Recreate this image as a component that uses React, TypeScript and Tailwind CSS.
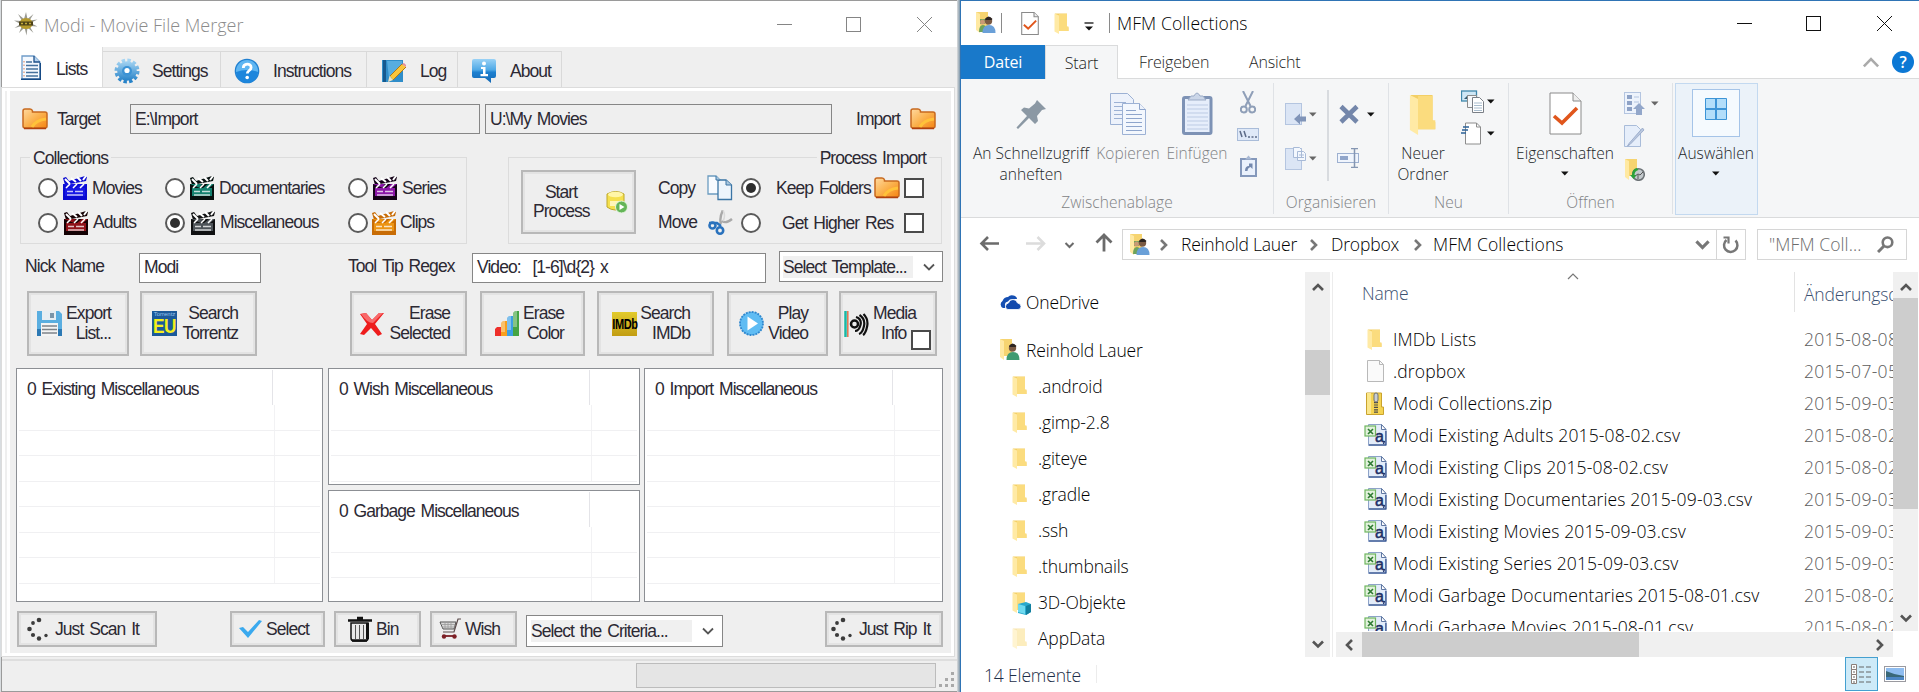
import React from "react";

type Kids = { children?: React.ReactNode; className?: string };

/* ---------- shared glyphs ---------- */

function WindowButtons({ color }: { color: string }) {
  return (
    <svg width="156" height="16" viewBox="0 0 156 16" fill="none" stroke={color} strokeWidth="1" shapeRendering="crispEdges">
      <path d="M1 8.5h15" />
      <rect x="70.5" y="1.5" width="14" height="14" />
      <path d="M141 1l15 15M156 1l-15 15" shapeRendering="auto" />
    </svg>
  );
}

function Caret({ color = "#111" }: { color?: string }) {
  return (
    <svg width="8" height="5" viewBox="0 0 8 5" className="shrink-0">
      <path d="M0 0.5h7.5L3.75 4.5z" fill={color} />
    </svg>
  );
}

function Chevron({ dir, color = "#555", size = 14, stroke = 2.6 }: { dir: "up" | "down" | "left" | "right"; color?: string; size?: number; stroke?: number }) {
  const d = {
    up: "M2 10l5-5 5 5",
    down: "M2 4.5l5 5 5-5",
    left: "M10 2L5 7l5 5",
    right: "M5 2l5 5-5 5",
  }[dir];
  return (
    <svg width={size} height={size} viewBox="0 0 14 14" fill="none" stroke={color} strokeWidth={stroke} className="shrink-0">
      <path d={d} />
    </svg>
  );
}

/* ---------- icons of the merger window ---------- */

function SpiderIcon() {
  return (
    <svg width="24" height="24" viewBox="0 0 24 24">
      <path d="M12 0l1.500 7 6-5-4 6.500 8-1-7 3.500 7 3.500-8-.5 4 7-6-5.500-1 8-2-8-5.500 5.500 3-7L.5 16l6-4L0 8.500l8 .5-4-7 6 5z" fill="#9a9a92" />
      <ellipse cx="12" cy="11.500" rx="6.500" ry="5.500" fill="#b59a2d" />
      <path d="M5 9.500h14v4H5z" fill="#4d4218" />
      <path d="M7 11.500h2m2 0h2m2 0h2" stroke="#c4ab3c" strokeWidth="1.500" />
    </svg>
  );
}

function ListIcon() {
  return (
    <svg width="22" height="25" viewBox="0 0 22 25">
      <path d="M2 1h12l6 6v17H2z" fill="#f4f9ff" stroke="#6f9cc9" strokeWidth="1.300" />
      <path d="M14 1v6h6" fill="#b8d4f0" stroke="#1d4f88" strokeWidth="1.300" />
      <path d="M6 7h6M6 10.500h12M6 14h12M6 17.500h12M6 21h12" stroke="#44719d" strokeWidth="1.500" />
      <path d="M4 6v16" stroke="#e2a58b" strokeWidth="1.500" strokeDasharray="1.500 2" />
      <path d="M1 24.200h20M20.300 8v16" stroke="#164a85" strokeWidth="1.400" />
    </svg>
  );
}

function GearIcon() {
  return (
    <svg width="26" height="26" viewBox="0 0 26 26">
      <defs>
        <linearGradient id="gear" x1="0" y1="0" x2="0" y2="1">
          <stop offset="0" stopColor="#a5d4f2" />
          <stop offset="1" stopColor="#2682c8" />
        </linearGradient>
      </defs>
      <circle cx="13" cy="13" r="10.500" fill="none" stroke="url(#gear)" strokeWidth="4" strokeDasharray="3.300 2.200" />
      <circle cx="13" cy="13" r="9.800" fill="url(#gear)" />
      <circle cx="13" cy="13" r="5" fill="#3c93d5" />
      <circle cx="13" cy="12.500" r="2.600" fill="#fff" />
    </svg>
  );
}

function HelpIcon() {
  return (
    <svg width="26" height="26" viewBox="0 0 26 26">
      <circle cx="13" cy="13" r="12.300" fill="#1f7fd0" />
      <circle cx="13" cy="13" r="11" fill="#5fb6f2" />
      <path d="M2 14a11 11 0 0022 0q-11-4-22 0z" fill="#1d86dc" />
      <path d="M9.300 10c0-5 7.800-5 7.800-.5 0 3-3.800 3-3.800 6" fill="none" stroke="#fff" strokeWidth="2.800" />
      <circle cx="13.200" cy="19.500" r="1.800" fill="#fff" />
    </svg>
  );
}

function LogIcon() {
  return (
    <svg width="26" height="26" viewBox="0 0 26 26">
      <path d="M1 2h21v22H1z" fill="#2f8dc9" />
      <path d="M2 2h3v22H2z" fill="#15598f" />
      <path d="M6 3h15v9L8 20z" fill="#57ade0" />
      <path d="M9 18L21 6l4 3-13 13z" fill="#fbc63b" />
      <path d="M9 18L21 6M12 22L25 9" stroke="#b07912" strokeWidth="1" />
      <path d="M21 6l2-1 2 2v2z" fill="#e58a9a" />
      <path d="M8.500 18l3.500 4-5 2z" fill="#f1e3c0" />
    </svg>
  );
}

function InfoIcon() {
  return (
    <svg width="26" height="26" viewBox="0 0 26 26">
      <defs>
        <linearGradient id="info" x1="0" y1="0" x2="0" y2="1">
          <stop offset="0" stopColor="#9ad2f6" />
          <stop offset="0.45" stopColor="#4fa9e6" />
          <stop offset="0.55" stopColor="#1d80d0" />
          <stop offset="1" stopColor="#1468b4" />
        </linearGradient>
      </defs>
      <path d="M3 1h20q2 0 2 2v15q0 2-2 2h-3v5l-6-5H3q-2 0-2-2V3q0-2 2-2z" fill="url(#info)" />
      <circle cx="13" cy="5.500" r="2" fill="#fff" />
      <path d="M10 9h4.500v7H17v2.200H9.500V16H12v-5h-2z" fill="#fff" />
    </svg>
  );
}

function OrangeFolder() {
  return (
    <svg width="26" height="22" viewBox="0 0 26 22" className="shrink-0">
      <defs>
        <linearGradient id="ofold" x1="0" y1="0" x2="1" y2="1">
          <stop offset="0" stopColor="#ffd9a0" />
          <stop offset="0.5" stopColor="#fbb24e" />
          <stop offset="1" stopColor="#f58412" />
        </linearGradient>
      </defs>
      <path d="M1 3q0-2 2-2h5q2 0 2.500 2v1H23q2 0 2 2v12q0 2-2 2H3q-2 0-2-2z" fill="url(#ofold)" stroke="#c7691f" strokeWidth="1.500" />
      <path d="M10 19q4-7 14-8" fill="none" stroke="#ffc23a" strokeWidth="3" />
      <path d="M2 20.500h22" stroke="#b0400e" strokeWidth="1.500" />
    </svg>
  );
}

function Clapper({ main, dark }: { main: string; dark: string }) {
  return (
    <svg width="24" height="24" viewBox="0 0 24 24" className="shrink-0">
      <path d="M0 2l3-1 3 4 16-5 2 1-1 4L2 9z" fill={dark} />
      <path d="M2 3l5 5M8 2l5 4M14 1l4 4M23 0l-3 4" stroke="#fff" strokeWidth="2" />
      <path d="M0 8h24v16H0z" fill={main} />
      <path d="M0 12v-4l10 4zM12 8l6 0-5 4h-4zM24 8v4h-5z" fill={dark} />
      <path d="M3 12l4-4M10 12l4-4M17 12l4-4" stroke="#fff" strokeWidth="1.600" />
      <path d="M0 20h24v4H0zM0 12h2v12H0zM22 12h2v12h-2z" fill={dark} />
      <path d="M4 15.500h6m2 0h8M4 19h16" stroke="#fff" strokeOpacity="0.75" strokeWidth="1.300" />
    </svg>
  );
}

function StartIcon() {
  return (
    <svg width="22" height="24" viewBox="0 0 22 24" className="shrink-0">
      <path d="M1 4q9-5 17 0v13q-9 6-17 0z" fill="#f5e04e" stroke="#bda728" />
      <ellipse cx="9.500" cy="4.500" rx="7.500" ry="2.800" fill="#fff6a8" />
      <path d="M4 11h9v5H4z" fill="#fff6b8" />
      <circle cx="15.500" cy="17" r="6" fill="#64b558" stroke="#e4f5df" />
      <path d="M13.500 14l5 3-5 3z" fill="#fff" />
    </svg>
  );
}

function CopyPages() {
  return (
    <svg width="26" height="26" viewBox="0 0 26 26" className="shrink-0">
      <path d="M1 1h8l4 4v14H1z" fill="#f7fbff" stroke="#6c9cc0" strokeWidth="1.300" />
      <path d="M11 5h8l5.500 5v14.500H11z" fill="#edf5fc" stroke="#3b75a5" strokeWidth="1.300" />
      <path d="M9 1v4h4M19 5v5h5.500" fill="#a9c8e0" stroke="#3b75a5" />
    </svg>
  );
}

function MoveScissors() {
  return (
    <svg width="26" height="26" viewBox="0 0 26 26" className="shrink-0" fill="none">
      <path d="M16 0q-4 8-2 14M25 9q-6 5-10 2" stroke="#a9a9a9" strokeWidth="2.400" />
      <path d="M16 0q3 6 0 11" stroke="#d9d9d9" strokeWidth="1.500" />
      <path d="M2 13h8l4 3" stroke="#2a72bd" strokeWidth="2.500" />
      <circle cx="5.500" cy="15.500" r="3" stroke="#2a72bd" strokeWidth="2.600" />
      <circle cx="13" cy="20.500" r="3.200" stroke="#2a72bd" strokeWidth="2.600" />
    </svg>
  );
}

function Floppy() {
  return (
    <svg width="25" height="25" viewBox="0 0 25 25" className="shrink-0">
      <path d="M0 0h22l3 3v22H0z" fill="#5aaee0" />
      <path d="M0 18h25v7H0z" fill="#2c79b4" />
      <path d="M5 0h14v9H5z" fill="#e8eef2" />
      <path d="M13 2h4v5h-4z" fill="#7b95a8" />
      <path d="M4 12h17v13H4z" fill="#f4f4f4" />
      <path d="M5 15h15M5 18.500h15M5 22h15" stroke="#7d8389" strokeWidth="1.500" />
    </svg>
  );
}

function EuIcon() {
  return (
    <span className="flex h-[25px] w-[25px] shrink-0 flex-col items-center overflow-hidden bg-[#1c5a9a]">
      <span className="h-[6px] text-[6px] leading-[7px] tracking-normal text-[#9dc4ea]">Torrentz</span>
      <span className="scale-x-[0.86] text-[20px] leading-[19px] font-bold tracking-[-0.5px] text-[#f6f01b]">EU</span>
    </span>
  );
}

function RedCross() {
  return (
    <svg width="26" height="26" viewBox="0 0 26 26" className="shrink-0">
      <path d="M1 3l6-1 6 7 7-7 5 0-9 11 7 10-4 2-7-8-7 7-4-1 7-10z" fill="#ee1c1c" />
      <path d="M2 3l5-1 6 7 7-7 4 0-10 10q-6 0-12-9z" fill="#f8696a" />
    </svg>
  );
}

function BarsIcon() {
  return (
    <svg width="26" height="26" viewBox="0 0 26 26" className="shrink-0">
      <path d="M1 18l2-2h4v9H1z" fill="#ee2f2a" />
      <path d="M7 12l2-2h4v15H7z" fill="#f7a01e" />
      <path d="M13 7l2-2h4v20h-6z" fill="#3d9fe2" />
      <path d="M19 2l2-2h4v25h-6z" fill="#45a443" />
      <path d="M7 12l2-2h2v11H7zM13 7l2-2h2v14h-4zM19 2l2-2h2v16h-4z" fill="#fff" fillOpacity="0.35" />
    </svg>
  );
}

function ImdbIcon() {
  return (
    <span className="flex h-[24px] w-[25px] shrink-0 items-center justify-center bg-linear-to-b from-[#e2cb2c] to-[#c29d12]">
      <span className="scale-x-[0.85] scale-y-[1.15] text-[13px] font-bold tracking-[-0.5px] text-black">IMDb</span>
    </span>
  );
}

function PlayIcon() {
  return (
    <svg width="25" height="25" viewBox="0 0 25 25" className="shrink-0">
      <circle cx="12.500" cy="12.500" r="11.500" fill="#5fbcf3" stroke="#2f88cf" strokeWidth="1.800" strokeDasharray="2 1" />
      <path d="M8.500 5.500l10.500 7-10.500 7z" fill="#fff" />
    </svg>
  );
}

function MediaIcon() {
  return (
    <svg width="25" height="26" viewBox="0 0 25 26" className="shrink-0" fill="none" stroke="#111">
      <path d="M1.500 0v26" stroke="#19b8a5" strokeWidth="2.500" />
      <path d="M3.800 0v26" stroke="#e2724d" strokeWidth="1.500" />
      <circle cx="10.500" cy="13" r="3.500" strokeWidth="2.500" />
      <path d="M12 6q6 2 4.500 8t-5.500 6M15.500 4q6 4 4.500 11t-5 8M19.500 3q5 5 3.700 12t-4.200 9" strokeWidth="2.200" />
    </svg>
  );
}

function DotsIcon() {
  const dots: [number, number, number][] = [[12, 3, 2.3], [6, 6, 1.900], [2.500, 12, 2.300], [6, 18, 2.100], [12, 21.500, 2.200], [19, 18.500, 1.700]];
  return (
    <svg width="22" height="25" viewBox="0 0 22 25" className="shrink-0">
      {dots.map(([x, y, r]) => (
        <circle key={`${x}-${y}`} cx={x} cy={y} r={r} fill="#3c3c3c" />
      ))}
    </svg>
  );
}

function CheckBlue() {
  return (
    <svg width="23" height="20" viewBox="0 0 23 20" className="shrink-0">
      <path d="M0 9l4-1 5 5L20 1l3 1L9 19z" fill="#3aa9ee" />
    </svg>
  );
}

function BinIcon() {
  return (
    <svg width="24" height="26" viewBox="0 0 24 26" className="shrink-0" fill="none" stroke="#111">
      <path d="M9 2h6M0 4.500h24" strokeWidth="2.600" />
      <path d="M3 7v15q0 3 3 3h11q3 0 3-3V7z" fill="#e9e9e9" strokeWidth="1.500" />
      <path d="M19.500 7v16" strokeWidth="3" />
      <path d="M7.500 9v14M11.500 9v14M15.500 9v14" strokeWidth="1" stroke="#555" />
      <path d="M4 24.500h15" strokeWidth="2.500" />
    </svg>
  );
}

function CartIcon() {
  return (
    <svg width="22" height="22" viewBox="0 0 22 22" className="shrink-0" fill="none">
      <path d="M1 4h16l-2 7H4z" fill="#dadada" stroke="#555" />
      <path d="M22 1h-3l-4 13H4" stroke="#5a4a4a" strokeWidth="1.200" />
      <path d="M2 6.500h14M3 9h13M6 4v7M9 4v7M12 4v7" stroke="#999" strokeWidth="0.8" />
      <path d="M4 18h13" stroke="#7c1f25" strokeWidth="1.800" />
      <circle cx="5" cy="18.500" r="2.200" fill="#7c1f25" />
      <circle cx="15.500" cy="18.500" r="2.200" fill="#7c1f25" />
    </svg>
  );
}

/* ---------- merger window controls ---------- */

function Radio({ on }: { on?: boolean }) {
  return (
    <span className="flex h-[20px] w-[20px] shrink-0 items-center justify-center rounded-full border-2 border-[#5a5a5a] bg-white">
      {on && <span className="h-[10px] w-[10px] rounded-full bg-[#2e2e2e]" />}
    </span>
  );
}

function CheckBox({ className = "" }: { className?: string }) {
  return <span className={`block h-[20px] w-[20px] shrink-0 border-2 border-[#4a4a4a] bg-white ${className}`} />;
}

function PushButton({ children, className = "" }: Kids) {
  return (
    <div className={`flex shrink-0 items-center border-2 border-[#b8b8b8] bg-[#eeeeee] shadow-[inset_0_0_0_2px_#e3e3e3] ${className}`}>
      {children}
    </div>
  );
}

function TabItem({ icon, label, className }: { icon: React.ReactNode; label: string; className: string }) {
  return (
    <div className={`flex h-[37px] items-center border-t border-r border-[#d9d9d9] pt-[2px] ${className}`}>
      {icon}
      <span>{label}</span>
    </div>
  );
}

function ListPane({ title, className, col, rows }: { title: string; className: string; col: string; rows: number }) {
  return (
    <div className={`flex flex-col overflow-hidden border-[1.5px] border-[#8c8f94] bg-white ${className}`}>
      <div className="flex h-[36px] shrink-0 pt-[1px]">
        <div className={`flex items-center border-r border-[#e4e4e8] pt-[4px] pl-[10px] tracking-[-1px] whitespace-nowrap ${col}`}>{title}</div>
      </div>
      {Array.from({ length: rows }, (_, i) => (
        <div key={i} className="mx-[2px] flex h-[25.5px] shrink-0 border-b border-[#f0f0f2]">
          <div className={`border-r border-[#f2f2f4] ${col}`} />
        </div>
      ))}
    </div>
  );
}

function MergerWindow() {
  return (
    <section className="flex h-[692px] w-[960px] shrink-0 overflow-hidden bg-[#d9dde0] pl-px font-['Liberation_Sans',Arial,sans-serif] text-[17.5px] tracking-[-0.95px] text-[#2c2933] [word-spacing:2px]">
      <div className="flex w-[956px] flex-col border-t border-b border-l border-[#9a9a9a] bg-[#efefef]">
        <header className="flex h-[46px] shrink-0 items-center bg-white pl-[12px]">
          <SpiderIcon />
          <span className="ml-[6px] pt-[2px] font-['Open_Sans','Noto_Sans',sans-serif] text-[18px] font-light tracking-[0px] text-[#8b8b8b] [word-spacing:0px]">Modi - Movie File Merger</span>
          <span className="mr-[25px] ml-auto">
            <WindowButtons color="#858585" />
          </span>
        </header>

        <nav className="flex h-[41px] shrink-0 items-end">
          <div className="flex h-[41px] w-[101px] items-center border-r border-[#dcdcdc] bg-white pl-[18px]">
            <ListIcon />
            <span className="ml-[14px] pt-[3px]">Lists</span>
          </div>
          <TabItem icon={<GearIcon />} label="Settings" className="w-[118px] gap-[12px] pl-[11px]" />
          <TabItem icon={<HelpIcon />} label="Instructions" className="w-[146px] gap-[13px] pl-[13px]" />
          <TabItem icon={<LogIcon />} label="Log" className="w-[91px] gap-[13px] pl-[14px]" />
          <TabItem icon={<InfoIcon />} label="About" className="w-[104px] gap-[13px] pl-[13px]" />
        </nav>

        <div className="mr-[3px] flex h-[568px] shrink-0 flex-col border-[3px] border-white bg-[#efefef] pl-[2px] shadow-[0_0_0_1px_#dcdcdc]">
          <div className="flex h-[562px] flex-col border-l-[3px] border-white">
            {/* paths */}
            <div className="mt-[13px] flex h-[30px] shrink-0 items-center pl-[12px]">
              <OrangeFolder />
              <span className="ml-[9px] w-[73px]">Target</span>
              <div className="flex h-[30px] w-[350px] items-center border-[1.5px] border-[#868686] pl-[4px]">E:\Import</div>
              <div className="ml-[5px] flex h-[30px] w-[347px] items-center border-[1.5px] border-[#868686] pl-[4px]">U:\My Movies</div>
              <span className="ml-[24px] w-[42px]">Import</span>
              <span className="ml-[12px]"><OrangeFolder /></span>
            </div>

            {/* option groups */}
            <div className="mt-[13px] flex h-[97px] shrink-0 pl-[10px]">
              <fieldset className="h-[97px] w-[447px] border-[1.5px] border-[#dcdcdc]">
                <legend className="ml-[9px] h-[20px] px-[3px] leading-[22px]">Collections</legend>
                <div className="grid grid-cols-[127px_183px_118px] grid-rows-[34px_35px] items-center pt-[4px] pl-[17px] whitespace-nowrap">
                  <div className="flex items-center gap-[5px]"><Radio /><Clapper main="#1717e6" dark="#0a0ad0" /><span>Movies</span></div>
                  <div className="flex items-center gap-[5px]"><Radio /><Clapper main="#13806f" dark="#06100f" /><span>Documentaries</span></div>
                  <div className="flex items-center gap-[5px]"><Radio /><Clapper main="#8b16a8" dark="#140318" /><span>Series</span></div>
                  <div className="flex items-center gap-[5px]"><Radio /><span className="ml-[1px]"><Clapper main="#8f1219" dark="#150204" /></span><span>Adults</span></div>
                  <div className="flex items-center gap-[5px]"><Radio on /><span className="ml-[1px]"><Clapper main="#4d5358" dark="#101112" /></span><span>Miscellaneous</span></div>
                  <div className="flex items-center gap-[4px]"><Radio /><Clapper main="#ec9413" dark="#c86c05" /><span>Clips</span></div>
                </div>
              </fieldset>
              <fieldset className="ml-[41px] h-[97px] w-[434px] border-[1.5px] border-[#dcdcdc]">
                <legend className="mr-[12px] ml-auto h-[20px] px-[3px] leading-[22px]">Process Import</legend>
                <div className="flex pl-[12px] whitespace-nowrap">
                  <PushButton className="mt-[3px] h-[64px] w-[115px] pl-[10px]">
                    <span className="w-[56px] text-center leading-[19.5px]">Start<br />Process</span>
                    <span className="ml-[17px]"><StartIcon /></span>
                  </PushButton>
                  <div className="ml-[22px] grid grid-cols-[49px_34px_35px_98px_30px_20px] grid-rows-[34px_35px] items-center pt-[4px]">
                    <span>Copy</span><CopyPages /><Radio on /><span>Keep Folders</span><OrangeFolder /><CheckBox />
                    <span>Move</span><MoveScissors /><Radio /><span className="col-span-2 pt-[2px] pl-[6px]">Get Higher Res</span><CheckBox className="mt-[1px]" />
                  </div>
                </div>
              </fieldset>
            </div>

            {/* name and filter */}
            <div className="mt-[7px] flex h-[31px] shrink-0 items-center pl-[15px]">
              <span className="w-[114px]">Nick Name</span>
              <div className="mt-[2px] flex h-[30px] w-[122px] items-center border-[1.5px] border-[#868686] bg-white pl-[4px]">Modi</div>
              <span className="ml-[87px] w-[124px]">Tool Tip Regex</span>
              <div className="mt-[2px] flex h-[30px] w-[294px] items-center border-[1.5px] border-[#868686] bg-white pl-[4px] whitespace-pre">Video:  [1-6]\d{"{2}"} x</div>
              <div className="ml-[13px] flex h-[31px] w-[164px] items-center border-[1.5px] border-[#868686] bg-white pl-[3px]">
                <span className="h-[22px] w-[130px] bg-[#f0f0f0] leading-[22px] whitespace-nowrap">Select Template...</span>
                <span className="ml-[9px]"><Chevron dir="down" stroke={1.800} /></span>
              </div>
            </div>

            {/* actions */}
            <div className="mt-[9px] flex h-[65px] shrink-0 pl-[17px] text-right leading-[19.5px]">
              <PushButton className="w-[102px] pl-[8px]"><Floppy /><span className="ml-[3px] w-[46px]">Export<br />List...</span></PushButton>
              <PushButton className="ml-[11px] w-[117px] pl-[10px]"><EuIcon /><span className="ml-[3px] w-[58px]">Search<br />Torrentz</span></PushButton>
              <PushButton className="ml-[93px] w-[117px] pl-[7px]"><RedCross /><span className="ml-[2px] w-[63px]">Erase<br />Selected</span></PushButton>
              <PushButton className="ml-[13px] w-[105px] pl-[12px]"><BarsIcon /><span className="ml-[1px] w-[43px]">Erase<br />Color</span></PushButton>
              <PushButton className="ml-[12px] w-[117px] pl-[13px]"><ImdbIcon /><span className="ml-[2px] w-[51px]">Search<br />IMDb</span></PushButton>
              <PushButton className="ml-[13px] w-[101px] pl-[10px]"><PlayIcon /><span className="ml-[3px] w-[41px]">Play<br />Video</span></PushButton>
              <PushButton className="relative ml-[11px] w-[98px] pl-[3px]">
                <MediaIcon />
                <span className="ml-[4px] flex flex-col items-start">
                  <span>Media</span>
                  <span className="ml-[8px]">Info</span>
                </span>
                <CheckBox className="absolute right-[4px] bottom-[4px]" />
              </PushButton>
            </div>

            {/* lists */}
            <div className="mt-[12px] flex h-[234px] shrink-0 pl-[6px]">
              <ListPane title="0 Existing Miscellaneous" className="w-[307px]" col="w-[256px]" rows={7} />
              <div className="ml-[5px] flex w-[312px] flex-col gap-[5px]">
                <ListPane title="0 Wish Miscellaneous" className="h-[117px]" col="w-[261px]" rows={3} />
                <ListPane title="0 Garbage Miscellaneous" className="h-[112px]" col="w-[261px]" rows={3} />
              </div>
              <ListPane title="0 Import Miscellaneous" className="ml-[4px] w-[299px]" col="w-[248px]" rows={7} />
            </div>

            {/* bottom actions */}
            <div className="mt-[9px] flex h-[36px] shrink-0 pl-[7px] whitespace-nowrap">
              <PushButton className="w-[140px] pl-[8px]"><DotsIcon /><span className="ml-[6px]">Just Scan It</span></PushButton>
              <PushButton className="ml-[73px] w-[95px] pl-[7px]"><CheckBlue /><span className="ml-[4px]">Select</span></PushButton>
              <PushButton className="ml-[9px] w-[87px] pl-[12px]"><BinIcon /><span className="ml-[4px]">Bin</span></PushButton>
              <PushButton className="ml-[9px] w-[87px] pl-[7px]"><CartIcon /><span className="ml-[4px]">Wish</span></PushButton>
              <div className="mt-[4px] ml-[9px] flex h-[32px] w-[197px] items-center border-[1.5px] border-[#868686] bg-white pl-[4px]">
                <span className="h-[22px] w-[161px] bg-[#f0f0f0] leading-[22px]">Select the Criteria...</span>
                <span className="ml-[9px]"><Chevron dir="down" stroke={1.800} /></span>
              </div>
              <PushButton className="ml-[102px] w-[118px] pl-[4px]"><DotsIcon /><span className="ml-[6px]">Just Rip It</span></PushButton>
            </div>
          </div>
        </div>

        <footer className="mt-[3px] flex h-[32px] shrink-0 items-start border-t-2 border-[#dedede] pt-[2px] pl-[634px]">
          <div className="h-[25px] w-[300px] border border-[#bcbcbc] bg-[#e5e5e5]" />
          <svg width="16" height="16" viewBox="0 0 16 16" className="mt-[9px] ml-[3px]" fill="#a9a9a9">
            <path d="M12 0h3v3h-3zM6 6h3v3H6zM12 6h3v3h-3zM0 12h3v3H0zM6 12h3v3H6zM12 12h3v3h-3z" />
          </svg>
        </footer>
      </div>
      <div className="h-full w-[3px] bg-linear-to-r from-[#dcdcdc] to-[#7f97aa]" />
    </section>
  );
}

/* ---------- icons of the file window ---------- */

function Folder({ w = 16, h = 21, faded }: { w?: number; h?: number; faded?: boolean }) {
  return (
    <svg width={w} height={h} viewBox="0 0 16 21" preserveAspectRatio="none" className={faded ? "shrink-0 opacity-50" : "shrink-0"}>
      <path d="M1 0.5h12v13l1.500 1v3.500H4z" fill="#f3cf66" />
      <path d="M5 1h8v12.500h1.500V18H5z" fill="#fbdc7e" />
      <path d="M0.500 0.500l4.500 2V21l-4.500-2.500z" fill="#ffeaa5" />
    </svg>
  );
}

function PeopleFolder({ solo }: { solo?: boolean }) {
  return (
    <svg width="21" height="22" viewBox="0 0 21 22" className="shrink-0">
      <path d="M1 0h12v17H3z" fill="#f6d470" />
      <path d="M1 0l4 2v19l-4-3z" fill="#ffe9a2" />
      {!solo && <path d="M5 7h5v5H5zM4 20q0-7 4-7t4 7z" fill="#6fa35a" />}
      {!solo && <circle cx="7.500" cy="10" r="2.500" fill="#c99a74" />}
      <circle cx="13.500" cy="9" r="3.700" fill="#7a5a43" />
      <path d="M10 7q3.500-5 7.500 0l-1 1h-6z" fill="#2c2420" />
      <path d="M7.500 21q0-8 6.500-8t6.500 8z" fill={solo ? "#3f9a71" : "#6aa0d8"} />
    </svg>
  );
}

function CheckDoc({ w, h, line }: { w: number; h: number; line: number }) {
  return (
    <svg width={w} height={h} viewBox="0 0 33 43" className="shrink-0">
      <path d="M1 1h23l8 8v33H1z" fill="#fff" stroke="#8a8a8a" strokeWidth={line} />
      <path d="M24 1v8h8" fill="#eee" stroke="#8a8a8a" strokeWidth={line} />
      <path d="M5 24l8 7 15-15" fill="none" stroke="#e0561c" strokeWidth="3.600" />
    </svg>
  );
}

function PinIcon() {
  return (
    <svg width="31" height="31" viewBox="0 0 31 31">
      <path d="M21 1l9 9-4 1-5 6 1 5-3 3-6-6L2 30l-1.500-1.500L11 17l-6-6 3-2.500 5 1 6-5z" fill="#8b98a4" />
    </svg>
  );
}

function CopyIcon() {
  const page = "M0.500 0.500h17l6 6v25h-23z";
  return (
    <svg width="36" height="43" viewBox="0 0 36 43" fill="#edf2fb" stroke="#9cb1d4">
      <path d={page} />
      <path d="M4 9.500h12M4 13.500h8M4 17.500h8M4 21.500h8M4 25.500h8" />
      <g transform="translate(12 10)">
        <path d={page} fill="#f3f7fd" />
        <path d="M17.500 0.500v6h6M4 7.500h10M4 11.500h16M4 15.500h16M4 19.500h16M4 23.500h16M4 27.500h16" stroke="#8ea5cc" />
      </g>
    </svg>
  );
}

function PasteIcon() {
  return (
    <svg width="31" height="43" viewBox="0 0 31 43">
      <rect x="1.500" y="5.500" width="27.500" height="36" rx="1.500" fill="#e6eefb" stroke="#7d92b5" strokeWidth="3" />
      <path d="M6 8l3-4h3q3-6 6 0h3l3 4z" fill="#cbd6e8" stroke="#9babc6" />
      <path d="M5 13h21M5 17h21M5 21h21M5 25h21M5 29h21M5 33h21M5 37h21" stroke="#bccbe4" />
    </svg>
  );
}

function CutIcon() {
  return (
    <svg width="16" height="23" viewBox="0 0 16 23" fill="none" stroke="#8f9fb8" strokeWidth="2">
      <path d="M3 0l7.500 15M13 0L5.500 15" />
      <circle cx="3.800" cy="18.500" r="3" />
      <circle cx="12.200" cy="18.500" r="3" />
    </svg>
  );
}

function PathIcon() {
  return (
    <svg width="22" height="13" viewBox="0 0 22 13">
      <rect x="0.500" y="0.500" width="21" height="12" fill="#dfe9f8" stroke="#a9bcd9" />
      <path d="M3 3l2 6M7 3l2 6" stroke="#5d6c88" strokeWidth="1.500" />
      <path d="M11 9h2M14.500 9h2M18 9h2" stroke="#5d6c88" strokeWidth="1.500" />
    </svg>
  );
}

function PasteLinkIcon() {
  return (
    <svg width="17" height="22" viewBox="0 0 17 22">
      <rect x="1" y="4" width="15" height="17" fill="#eaf1fc" stroke="#8498bb" strokeWidth="2" />
      <path d="M5 4.500l3.500-4 3.500 4z" fill="#a8b8d3" />
      <path d="M5 16q0-5 4-5V8.500L6.500 8.500h6V14l-2-2q-3 1-3 4z" fill="#7489ae" />
    </svg>
  );
}

function MoveToIcon() {
  return (
    <svg width="21" height="23" viewBox="0 0 21 23">
      <rect x="0.500" y="0.500" width="16" height="21" fill="#dbe5f5" stroke="#b4c5e0" />
      <path d="M9 16l6-5.500v3h6v5h-6v3z" fill="#8094b8" />
    </svg>
  );
}

function CopyToIcon() {
  return (
    <svg width="21" height="23" viewBox="0 0 21 23" stroke="#a8bad7">
      <rect x="0.500" y="1.500" width="16" height="21" fill="#dbe5f5" stroke="#b4c5e0" />
      <path d="M8.500 0.500h6l2 2v8h-8zM12.500 4.500h6l2 2v7h-8z" fill="#f4f8fe" />
      <path d="M14 8h5M14 10.500h5" />
    </svg>
  );
}

function DeleteIcon() {
  return (
    <svg width="20" height="20" viewBox="0 0 20 20" stroke="#7386aa" strokeWidth="4.600">
      <path d="M2 2.500l16 15.500M18 2.500L2 18" />
    </svg>
  );
}

function RenameIcon() {
  return (
    <svg width="23" height="20" viewBox="0 0 23 20" fill="none" stroke="#9db0d0">
      <rect x="0.500" y="5.500" width="21" height="9" fill="#f0f5fd" />
      <path d="M3 8h8v4H3z" fill="#90a5ca" stroke="none" />
      <path d="M17.500 1v18M14 0.500h7M14 19.500h7" stroke="#8596b2" strokeWidth="1.500" />
    </svg>
  );
}

function NewItemIcon() {
  return (
    <svg width="23" height="23" viewBox="0 0 23 23">
      <rect x="0.500" y="1" width="15" height="10" fill="#cfe7f5" stroke="#3f87ab" strokeWidth="1.300" />
      <path d="M3 9l4-4 3 4z" fill="#355c72" />
      <path d="M6.500 5.500h9v12h-9z" fill="#f6f8fa" stroke="#8a8a8a" />
      <path d="M11.500 7.500h7l4 4v11h-11z" fill="#fff" stroke="#7a7f86" />
      <path d="M13 13h8M13 15.500h8M13 18h8M13 20.500h8" stroke="#a8bccd" />
    </svg>
  );
}

function EasyIcon() {
  return (
    <svg width="21" height="23" viewBox="0 0 21 23">
      <path d="M4.500 1h11l4 4v17h-15z" fill="#fff" stroke="#8c8c8c" />
      <path d="M15.500 1v4h4" fill="none" stroke="#8c8c8c" />
      <path d="M2 5h6M1 8h6M0 11h5" stroke="#2b6298" strokeWidth="1.400" />
    </svg>
  );
}

function OpenIcon() {
  return (
    <svg width="21" height="23" viewBox="0 0 21 23">
      <rect x="0.500" y="0.500" width="16" height="21" fill="#edf3fc" stroke="#b4c5e0" />
      <path d="M3 3h5v4H3zM3 9h5v4H3zM3 15h5v4H3z" fill="#8ea2c6" />
      <path d="M10 5h5M10 10h5" stroke="#b4c5e0" />
      <path d="M15 11l6 6h-3v6h-6v-6H9z" fill="#93a7ca" />
    </svg>
  );
}

function EditIcon() {
  return (
    <svg width="21" height="23" viewBox="0 0 21 23">
      <path d="M0.500 0.500h12l4 4v17h-16z" fill="#e6eefa" stroke="#a9bcd9" />
      <path d="M18.500 3L5 18.500l-1.500 2.500L6 19.500 20 5z" fill="#b9c7de" stroke="#93a5c5" strokeWidth="0.8" />
    </svg>
  );
}

function HistoryIcon() {
  return (
    <svg width="21" height="22" viewBox="0 0 21 22">
      <path d="M1 0h12v17H3z" fill="#f6d470" />
      <path d="M1 0l4 2v19l-4-3z" fill="#ffe9a2" />
      <circle cx="14.500" cy="15.500" r="5.800" fill="#c3c9cd" stroke="#6b7175" strokeWidth="1.500" />
      <path d="M11 17l3-2 2 1 3-3M14 16v4" stroke="#555" fill="none" />
      <path d="M13 9q-5 1-5 7H6l3.500 4 3-4h-2q0-4 4-5z" fill="#2ba13a" />
    </svg>
  );
}

function SelectIcon() {
  return (
    <span className="flex h-[48px] w-[48px] justify-center border border-[#a5c4e8] bg-[#f5fafe] pt-[8px]">
      <svg width="22" height="22" viewBox="0 0 22 22" fill="#b3defa" stroke="#3d94d6">
        <path d="M0.500 0.500h21v21h-21z" />
        <path d="M11 0v22M0 11h22" strokeWidth="2" />
      </svg>
    </span>
  );
}

function CloudIcon() {
  return (
    <svg width="22" height="15" viewBox="0 0 22 15" className="shrink-0">
      <path d="M4 13a4 4 0 01-.5-7Q5 2 9 2q2-2.500 5.500-1.500T18 4l-5 0q-3 0-4 2.500Q6 7 6 9.500V13z" fill="#154fb2" />
      <path d="M9 14.500q-2.500 0-2.500-3T9.500 8q1-3.500 4.500-3.500T18.500 8q3.500.5 3.500 3.500t-3 3z" fill="#1149ad" stroke="#fff" strokeWidth="0.800" />
    </svg>
  );
}

function PageIcon() {
  return (
    <svg width="17" height="22" viewBox="0 0 17 22" className="shrink-0">
      <path d="M0.500 0.500h12l4 4v17h-16z" fill="#fafafa" stroke="#b9b9b9" />
      <path d="M12.500 0.500v4h4" fill="none" stroke="#b9b9b9" />
    </svg>
  );
}

function ZipIcon() {
  return (
    <svg width="18" height="23" viewBox="0 0 18 23" className="shrink-0">
      <path d="M0.500 1h15v14h2v7.500h-17z" fill="#f5d452" stroke="#c9a32e" />
      <path d="M1 1h4v21H1z" fill="#fbe78c" />
      <path d="M10 10v12" stroke="#4a4a4a" strokeWidth="4" strokeDasharray="1.200 1.200" />
      <rect x="8" y="1" width="4" height="9" rx="2" fill="#c9ced3" stroke="#6e7275" />
    </svg>
  );
}

function CsvIcon() {
  return (
    <svg width="23" height="22" viewBox="0 0 23 22" className="shrink-0">
      <path d="M4.500 0.500h13l4.500 5v16H4.500z" fill="#e3ecf9" stroke="#8ea3c8" />
      <path d="M17.500 0.500v5H22z" fill="#fff" stroke="#5f77a2" />
      <path d="M5 20.800h17.500M21.900 7v14" stroke="#3b5892" strokeWidth="1.300" />
      <rect x="1" y="2" width="10.500" height="10" fill="#e2f1dc" stroke="#6fb65f" strokeWidth="1.200" />
      <path d="M4 5l5 5M9 5l-5 5" stroke="#2c7a31" strokeWidth="1.600" />
      <text x="11" y="18" fontSize="16" fontWeight="normal" fontFamily="Liberation Sans, sans-serif" letterSpacing="0" fill="#1d2f66" stroke="#1d2f66" strokeWidth="0.5">a</text>
      <path d="M20.500 17l-1 3" stroke="#1d2f66" strokeWidth="1.300" />
    </svg>
  );
}

function ObjectsIcon() {
  return (
    <span className="relative">
      <Folder />
      <svg width="14" height="13" viewBox="0 0 14 13" className="absolute top-[10px] left-[6px]">
        <path d="M0 2l8-2 5 2v8l-5 3-8-2z" fill="#2aa9cc" />
        <path d="M0 2l7 2v8L0 10z" fill="#6fdaf0" />
        <path d="M8 4l5-2v8l-5 3z" fill="#127f9f" />
      </svg>
    </span>
  );
}

/* ---------- file window ---------- */

function Group({ label, className, children }: Kids & { label: string }) {
  return (
    <div className={`mt-[4px] flex h-[131px] shrink-0 flex-col border-r border-[#dfe2e6] ${className}`}>
      <div className="flex h-[109px]">{children}</div>
      <div className="pt-px text-center text-[15.5px] leading-[24px] text-[#808285]">{label}</div>
    </div>
  );
}

const nav: { name: string; icon: "folder" | "objects" | "faded" }[] = [
  { name: ".android", icon: "folder" },
  { name: ".gimp-2.8", icon: "folder" },
  { name: ".giteye", icon: "folder" },
  { name: ".gradle", icon: "folder" },
  { name: ".ssh", icon: "folder" },
  { name: ".thumbnails", icon: "folder" },
  { name: "3D-Objekte", icon: "objects" },
  { name: "AppData", icon: "faded" },
];

const files: { name: string; date: string; kind: "dir" | "page" | "zip" | "csv" }[] = [
  { name: "IMDb Lists", date: "2015-08-08", kind: "dir" },
  { name: ".dropbox", date: "2015-07-05", kind: "page" },
  { name: "Modi Collections.zip", date: "2015-09-03", kind: "zip" },
  { name: "Modi Existing Adults 2015-08-02.csv", date: "2015-08-02", kind: "csv" },
  { name: "Modi Existing Clips 2015-08-02.csv", date: "2015-08-02", kind: "csv" },
  { name: "Modi Existing Documentaries 2015-09-03.csv", date: "2015-09-03", kind: "csv" },
  { name: "Modi Existing Movies 2015-09-03.csv", date: "2015-09-03", kind: "csv" },
  { name: "Modi Existing Series 2015-09-03.csv", date: "2015-09-03", kind: "csv" },
  { name: "Modi Garbage Documentaries 2015-08-01.csv", date: "2015-08-02", kind: "csv" },
  { name: "Modi Garbage Movies 2015-08-01.csv", date: "2015-08-02", kind: "csv" },
];

const fileIcons = { dir: <Folder />, page: <PageIcon />, zip: <ZipIcon />, csv: <CsvIcon /> };
const navIcons = { folder: <Folder />, objects: <ObjectsIcon />, faded: <Folder faded /> };

function ExplorerWindow() {
  return (
    <section className="flex h-[692px] w-[959px] shrink-0 flex-col overflow-hidden border-t border-l border-[#2f74b5] bg-white font-['Open_Sans','Noto_Sans',sans-serif] text-[17.5px] font-light tracking-[-0.15px] whitespace-nowrap text-black">
      <header className="flex h-[44px] shrink-0 items-center pl-[14px]">
        <PeopleFolder />
        <span className="ml-[5px] h-[20px] w-px bg-[#8a8a8a]" />
        <span className="ml-[19px]"><CheckDoc w={18} h={23} line={2} /></span>
        <span className="ml-[15px]"><Folder /></span>
        <svg width="10" height="9" viewBox="0 0 10 9" className="mt-[6px] ml-[14px]">
          <path d="M0.500 1h9" stroke="#111" strokeWidth="1.300" />
          <path d="M1 4.500h8L5 8.500z" fill="#111" />
        </svg>
        <span className="ml-[15px] h-[20px] w-px bg-[#8a8a8a]" />
        <span className="ml-[7px] tracking-[0.1px]">MFM Collections</span>
        <span className="mr-[27px] mb-[1px] ml-auto"><WindowButtons color="#111" /></span>
      </header>

      <nav className="flex h-[34px] shrink-0 items-stretch text-[16px] text-[#1e1e1e]">
        <div className="flex w-[84px] items-center justify-center bg-[#1979ca] font-normal text-white">Datei</div>
        <div className="flex w-[73px] items-center justify-center border-x border-t border-[#dadbdc] bg-[#f5f6f7]">Start</div>
        <div className="flex flex-1 items-center border-b border-[#dadbdc] pl-[21px]">
          <span className="w-[110px]">Freigeben</span>
          <span>Ansicht</span>
          <span className="ml-auto"><Chevron dir="up" size={20} stroke={1.800} color="#aaa" /></span>
          <span className="mr-[5px] ml-[11px] flex h-[22px] w-[22px] items-center justify-center rounded-full bg-[#0c78d4] text-[16px] font-semibold text-white">?</span>
        </div>
      </nav>

      <div className="flex h-[139px] shrink-0 border-b border-[#dadbdc] bg-[#f5f6f7] text-center text-[15.5px] leading-[21px] tracking-[0.05px] text-[#222527]">
        <Group label="Zwischenablage" className="w-[313px]">
          <div className="ml-[10px] flex w-[120px] flex-col items-center">
            <span className="mt-[16px] flex h-[44px] items-start"><PinIcon /></span>
            <span>An Schnellzugriff<br />anheften</span>
          </div>
          <div className="ml-[5px] flex w-[64px] flex-col items-center text-[#808285]">
            <span className="mt-[10px] h-[50px]"><CopyIcon /></span>
            <span>Kopieren</span>
          </div>
          <div className="ml-[6px] flex w-[62px] flex-col items-center text-[#808285]">
            <span className="mt-[9px] h-[51px]"><PasteIcon /></span>
            <span>Einfügen</span>
          </div>
          <div className="ml-[9px] flex flex-col items-center pt-[8px]">
            <CutIcon />
            <span className="mt-[14px] mb-[14px]"><PathIcon /></span>
            <PasteLinkIcon />
          </div>
        </Group>
        <Group label="Organisieren" className="w-[115px]">
          <div className="mt-[7px] ml-[11px] flex h-[91px] w-[44px] flex-col gap-[21px] border-r-2 border-[#d8dbdf] pt-[13px]">
            <div className="flex items-center gap-[3px]"><MoveToIcon /><Caret color="#666" /></div>
            <div className="flex items-center gap-[3px]"><CopyToIcon /><Caret color="#666" /></div>
          </div>
          <div className="ml-[8px] flex flex-col gap-[24px] pt-[21px]">
            <div className="flex items-center gap-[8px] pl-[2px]"><DeleteIcon /><Caret /></div>
            <RenameIcon />
          </div>
        </Group>
        <Group label="Neu" className="w-[120px]">
          <div className="ml-[6px] flex w-[56px] flex-col items-center">
            <span className="mt-[11px] h-[49px]"><Folder w={29} h={41} /></span>
            <span>Neuer<br />Ordner</span>
          </div>
          <div className="ml-[10px] flex flex-col gap-[9px] pt-[7px]">
            <div className="flex items-center gap-[3px]"><NewItemIcon /><Caret /></div>
            <div className="flex items-center gap-[5px]"><EasyIcon /><Caret /></div>
          </div>
        </Group>
        <Group label="Öffnen" className="w-[164px]">
          <div className="ml-[6px] flex w-[100px] flex-col items-center">
            <span className="mt-[9px] h-[51px]"><CheckDoc w={33} h={43} line={1} /></span>
            <span>Eigenschaften</span>
            <span className="mt-[7px] leading-none"><Caret /></span>
          </div>
          <div className="ml-[9px] flex flex-col pt-[9px]">
            <div className="flex items-center gap-[6px]"><OpenIcon /><Caret color="#666" /></div>
            <span className="mt-[10px] mb-[11px]"><EditIcon /></span>
            <HistoryIcon />
          </div>
        </Group>
        <div className="mt-[4px] ml-[2px] flex h-[132px] w-[83px] flex-col items-center border border-[#c3d9f0] bg-[#ebf2f9] pt-[5px] pr-px">
          <SelectIcon />
          <span className="mt-[6px]">Auswählen</span>
          <span className="mt-[7px] leading-none"><Caret /></span>
        </div>
      </div>

      <div className="flex h-[54px] shrink-0 items-start pt-[11px]">
        <svg width="140" height="30" viewBox="0 0 140 30" fill="none" strokeWidth="2.600" className="ml-[12px] shrink-0">
          <path d="M26 14.500H9M15 8l-6.500 6.500L15 21" stroke="#6b6b6b" />
          <path d="M53 14.500h17M64.500 8l6.500 6.500-6.500 6.500" stroke="#dcdcdc" />
          <path d="M92.500 14l4 4 4-4" stroke="#6b6b6b" strokeWidth="2" />
          <path d="M131 22.500V6M123.500 13.500L131 6l7.500 7.500" stroke="#6b6b6b" strokeWidth="2.800" />
        </svg>
        <div className="ml-[9px] flex h-[31px] w-[624px] items-center border border-[#d6d6d6] pl-[6px]">
          <PeopleFolder />
          <span className="mr-[11px] ml-[6px]"><Chevron dir="right" color="#777" /></span>
          <span className="w-[116px] tracking-[-0.2px]">Reinhold Lauer</span>
          <span className="mr-[11px] ml-[9px]"><Chevron dir="right" color="#777" /></span>
          <span className="w-[70px]">Dropbox</span>
          <span className="mr-[9px] ml-[9px]"><Chevron dir="right" color="#777" /></span>
          <span className="tracking-[0.1px]">MFM Collections</span>
          <span className="mr-[5px] ml-auto"><Chevron dir="down" color="#777" size={17} /></span>
          <span className="flex h-[29px] w-[29px] items-center justify-center border-l border-[#d6d6d6]">
            <svg width="18" height="18" viewBox="0 0 18 18" fill="none" stroke="#777" strokeWidth="2.500">
              <path d="M13.500 4.500A6.700 6.700 0 114.500 4" />
              <path d="M1.500 1.500h5v6" strokeWidth="2.200" />
            </svg>
          </span>
        </div>
        <div className="ml-[11px] flex h-[31px] w-[150px] items-center border border-[#d6d6d6] pl-[11px] text-[#6c6c6c]">
          <span className="tracking-[0.1px]">"MFM Coll...</span>
          <svg width="17" height="17" viewBox="0 0 17 17" fill="none" stroke="#777" strokeWidth="2.600" className="mr-[12px] ml-auto">
            <circle cx="10.500" cy="6.300" r="4.800" />
            <path d="M7 10L1 16" strokeWidth="3" />
          </svg>
        </div>
      </div>

      <div className="flex h-[385px] shrink-0">
        <div className="h-[385px] w-[344px] overflow-hidden">
          <div className="mt-[12px] flex h-[36px] items-center pl-[38px]"><CloudIcon /><span className="ml-[5px]">OneDrive</span></div>
          <div className="mt-[12px] flex h-[36px] items-center pl-[38px]"><PeopleFolder solo /><span className="ml-[6px]">Reinhold Lauer</span></div>
          {nav.map((n) => (
            <div key={n.name} className="flex h-[36px] items-center gap-[10px] pl-[51px]">{navIcons[n.icon]}<span>{n.name}</span></div>
          ))}
        </div>
        <div className="flex w-[25px] flex-col items-center bg-[#f0f0f0] pt-[8px]">
          <Chevron dir="up" />
          <div className="mt-[56px] h-[45px] w-full bg-[#cdcdcd]" />
          <span className="mt-auto pb-[6px]"><Chevron dir="down" /></span>
        </div>
        <div className="ml-[2px] w-px bg-[#ececec]" />
        <div className="ml-[3px] flex w-[582px] flex-col">
          <div className="flex h-[359px]">
            <div className="h-[359px] w-[558px] overflow-hidden">
              <div className="flex h-[51px] items-start text-[#3b5070]">
                <div className="flex h-[40px] w-[459px] shrink-0 items-center border-r border-[#e3e3e3] pl-[26px]">
                  <span className="w-[204px] pt-[3px]">Name</span>
                  <span className="mb-[32px]"><Chevron dir="up" size={14} stroke={1.200} color="#777" /></span>
                </div>
                <span className="pt-[9px] pl-[9px]">Änderungsdatum</span>
              </div>
              {files.map((f) => (
                <div key={f.name} className="flex h-[32px] items-center tracking-[0.14px]">
                  <span className="flex w-[57px] shrink-0 justify-center pl-[21px]">{fileIcons[f.kind]}</span>
                  <span className="w-[411px] shrink-0">{f.name}</span>
                  <span className="tracking-[0.3px] text-[#5c5c5c]">{f.date}</span>
                </div>
              ))}
            </div>
            <div className="flex w-[25px] flex-col items-center bg-[#f0f0f0] pt-[8px]">
              <Chevron dir="up" />
              <div className="mt-[4px] h-[211px] w-full bg-[#cdcdcd]" />
              <span className="mt-auto pb-[6px]"><Chevron dir="down" /></span>
            </div>
          </div>
          <div className="mt-px flex h-[25px] w-[557px] items-center bg-[#f0f0f0] pl-[6px]">
            <Chevron dir="left" />
            <div className="ml-[6px] h-[25px] w-[277px] bg-[#cdcdcd]" />
            <span className="mr-[7px] ml-auto"><Chevron dir="right" /></span>
          </div>
        </div>
      </div>

      <footer className="flex h-[34px] shrink-0 items-center pl-[23px] text-[#1d2e48]">
        <span className="w-[112px] pt-[3px]">14 Elemente</span>
        <span className="h-[18px] w-px bg-[#ececec]" />
        <span className="mr-[6px] ml-auto flex h-[34px] w-[33px] items-center justify-center border border-[#44a0d0] bg-[#cdeaf8]">
          <svg width="23" height="22" viewBox="0 0 23 22" fill="none" stroke="#8a7f7a">
            <path d="M1.500 1.500h5v5h-5zM1.500 6.500h5v5h-5zM1.500 11.500h5v5h-5zM1.500 16.500h5v4h-5z" fill="#fff" />
            <path d="M3 4h2M3 9h2M3 14h2M3 19h2M9 4h5M16 4h5M9 9h5M16 9h5M9 14h5M16 14h5M9 19h5M16 19h5" stroke="#666" strokeWidth="1.200" />
          </svg>
        </span>
        <svg width="22" height="16" viewBox="0 0 22 16" className="mr-[13px]">
          <rect x="0.500" y="0.500" width="21" height="15" fill="#fff" stroke="#9a9aa0" />
          <path d="M2 2h18v12H2z" fill="#8fbdf0" />
          <path d="M2 5q9 4 18 5v2H2z" fill="#3a6878" />
          <path d="M2 11h18v3H2z" fill="#4d86c4" />
        </svg>
      </footer>
    </section>
  );
}

export default function App() {
  return (
    <main className="flex h-[692px] w-[1919px] overflow-hidden bg-white">
      <MergerWindow />
      <ExplorerWindow />
    </main>
  );
}
